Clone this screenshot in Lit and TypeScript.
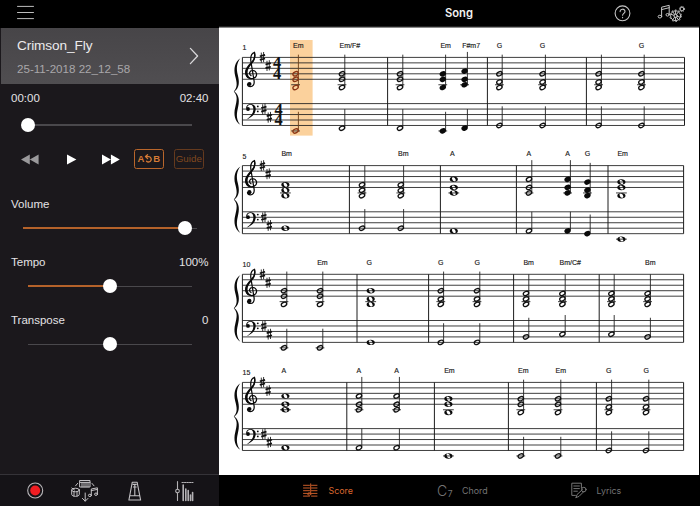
import { LitElement, html, svg, css } from "lit";
import { customElement, property } from "lit/decorators.js";

type Kind = "half" | "whole" | "quarter";
interface Chord {
  x: number;
  kind: Kind;
  treble: number[];
  bass: number;
  active?: boolean;
}
interface System {
  number: string;
  top: number;
  right: number;
  meter?: boolean;
  bars: number[];
  labels: [number, string][];
  chords: Chord[];
}

// Staff steps counted downwards from the top line.
const EM = [6, 8, 11];
const G = [6, 9, 11];
const BM = [7, 9, 11];
const A = [5, 8, 10];
const c = (x: number, kind: Kind, treble: number[], bass: number, active = false): Chord => ({ x, kind, treble, bass, active });

const SYSTEMS: System[] = [
  {
    number: "1", top: 30.4, right: 684.5, meter: true, bars: [387.6, 487.4, 586.4],
    labels: [[293, "Em"], [339.6, "Em/F#"], [440.4, "Em"], [462.2, "F#m7"], [496.8, "G"], [539.8, "G"], [638.8, "G"]],
    chords: [c(295.6, "half", EM, 10, true), c(342, "half", EM, 9), c(400, "half", EM, 9), c(442.8, "quarter", EM, 10), c(464.6, "quarter", A, 9),
      c(499.4, "half", G, 8), c(542.6, "half", G, 8), c(598.6, "half", G, 8), c(641.4, "half", G, 8)],
  },
  {
    number: "5", top: 30.6, right: 683.6, bars: [349.4, 440.4, 516.4, 608],
    labels: [[281.4, "Bm"], [398, "Bm"], [450, "A"], [526.4, "A"], [565.2, "A"], [584.8, "G"], [617.4, "Em"]],
    chords: [c(285.4, "whole", BM, 6), c(362, "half", BM, 6), c(400.8, "half", BM, 6), c(453.8, "whole", A, 7), c(529, "half", A, 7),
      c(567.6, "quarter", A, 7), c(587.4, "quarter", G, 8), c(621.4, "whole", EM, 10)],
  },
  {
    number: "10", top: 31.3, right: 683.6, bars: [357, 428.6, 513.6, 599.2],
    labels: [[317.2, "Em"], [366.6, "G"], [438, "G"], [474.4, "G"], [523.4, "Bm"], [559.6, "Bm/C#"], [645, "Bm"]],
    chords: [c(284, "half", EM, 10), c(320, "half", EM, 10), c(370.7, "whole", G, 8), c(440.8, "half", G, 8), c(477, "half", G, 8),
      c(526, "half", BM, 6), c(562.4, "half", BM, 5), c(611.4, "half", BM, 5), c(647.6, "half", BM, 6)],
  },
  {
    number: "15", top: 31.4, right: 683.6, bars: [346.8, 434.4, 508.4, 596.4],
    labels: [[281.4, "A"], [356.6, "A"], [394.2, "A"], [444.2, "Em"], [518, "Em"], [555.6, "Em"], [606, "G"], [643.6, "G"]],
    chords: [c(285.4, "whole", A, 7), c(359, "half", A, 7), c(396.6, "half", A, 7), c(448.4, "whole", EM, 10), c(520.8, "half", EM, 10),
      c(558, "half", EM, 10), c(608.8, "half", G, 8), c(646, "half", G, 8)],
  },
];

const GAP = 5.47;
const STEP = GAP / 2;
const BASS = 46.2;
const LEFT = 242.4;

@customElement("value-slider")
class ValueSlider extends LitElement {
  @property({ type: Number }) value = 0;
  @property({ type: Boolean }) filled = false;
  static styles = css`
    :host { display: grid; align-items: center; height: 14px; }
    .track { grid-area: 1 / 1; height: 1.4px; background: #4a484c; }
    .fill { grid-area: 1 / 1; height: 2px; background: #b5622a; }
    .knob { grid-area: 1 / 1; width: 14px; height: 14px; border-radius: 50%; background: #fff; }
  `;
  render() {
    return html`<div class="track"></div>
      ${this.filled ? html`<div class="fill" style="width:${this.value}%"></div>` : ""}
      <div class="knob" style="margin-left:calc(${this.value}% - 7px)"></div>`;
  }
}

@customElement("score-system")
class ScoreSystem extends LitElement {
  @property({ attribute: false }) system!: System;
  static styles = css`
    :host { display: block; height: 108px; }
    svg { display: block; width: 480px; height: 108px; overflow: visible; }
    .line { stroke: #1c1c1c; stroke-width: 0.85; fill: none; }
    .bar { stroke: #1c1c1c; stroke-width: 1; }
    .stem { stroke: #222; stroke-width: 0.9; }
    .ink { fill: #0a0a0a; }
    .open { fill: none; stroke: #111; stroke-width: 1.3; }
    .active .open { stroke: #8a3413; }
    .active .stem { stroke: #6d3d16; }
    .glow { fill: #fbd19c; }
    .clef { fill: none; stroke: #0a0a0a; stroke-linecap: round; stroke-width: 1.25; }
    .sharp { stroke: #111; fill: none; }
    .label { font: 7px "Liberation Sans", Arial, sans-serif; fill: #1a1a1a; stroke: #1a1a1a; stroke-width: 0.15; }
    .meter { font: bold 16.4px "Liberation Serif", serif; fill: #111; text-anchor: middle; }
  `;

  head(x: number, y: number, kind: Kind) {
    if (kind === "whole")
      return svg`<path class="ink" fill-rule="evenodd" transform="translate(${x} ${y})"
        d="M-4.1 0C-4.1 -1.8 -2.2 -2.7 0 -2.7S4.1 -1.8 4.1 0S2.2 2.7 0 2.7S-4.1 1.8 -4.1 0ZM-1.8 -.7C-1.6 .2 -.9 2.1 .5 2.1C1.7 2.1 2.2 1.4 1.8 .3C1.4 -1 .6 -2.1 -.5 -2.1C-1.6 -2.1 -2 -1.5 -1.8 -.7Z"/>`;
    if (kind === "quarter")
      return svg`<ellipse class="ink" rx="3.3" ry="2.6" transform="translate(${x} ${y}) rotate(-25)"/>`;
    return svg`<g transform="translate(${x} ${y}) rotate(-28)"><ellipse class="open" rx="2.85" ry="1.95"/></g>`;
  }

  sharp(x: number, y: number) {
    return svg`<g class="sharp" transform="translate(${x} ${y})">
      <path stroke-width=".85" d="M-1.1 -4.8V5.4M1.2 -5.4V4.8"/>
      <path stroke-width="1.7" d="M-2.6 -1.1L2.7 -2.5M-2.6 2.5L2.7 1.1"/></g>`;
  }

  meter(x: number, y: number) {
    return svg`<text class="meter" y=${y + 2 * GAP}><tspan x=${x}>4</tspan><tspan x=${x} dy=${2 * GAP}>4</tspan></text>`;
  }

  chord(ch: Chord, top: number) {
    const ty = (s: number) => top + s * STEP;
    const by = (s: number) => top + BASS + s * STEP;
    const w = ch.kind === "whole" ? 5.4 : 4.4;
    const sx = ch.x + 2.8;
    return svg`<g class=${ch.active ? "active" : ""}>
      ${ch.treble.some((s) => s >= 10) ? svg`<path class="line" d="M${ch.x - w} ${ty(10)}h${2 * w}"/>` : ""}
      ${ch.bass >= 10 ? svg`<path class="line" d="M${ch.x - w} ${by(10)}h${2 * w}"/>` : ""}
      ${ch.kind === "whole" ? "" : svg`<path class="stem" d="M${sx} ${ty(ch.treble[0] - 7)}V${ty(ch.treble[2]) - 1}M${sx} ${by(ch.bass - 7)}V${by(ch.bass) - 1}"/>`}
      ${ch.treble.map((s) => this.head(ch.x, ty(s), ch.kind))}
      ${this.head(ch.x, by(ch.bass), ch.kind)}
    </g>`;
  }

  render() {
    const s = this.system;
    const t = s.top;
    const b = t + BASS;
    const rows = [0, 1, 2, 3, 4];
    return html`<svg viewBox="219 0 480 108">
      ${s.meter ? svg`<rect class="glow" x="290" y="13" width="22.6" height="95.6"/>` : ""}
      ${rows.map((i) => svg`<path class="line" d="M${LEFT} ${t + i * GAP}H${s.right}M${LEFT} ${b + i * GAP}H${s.right}"/>`)}
      ${[LEFT, ...s.bars, s.right].map((x) => svg`<path class="bar" d="M${x} ${t}V${b + 4 * GAP}"/>`)}
      <g transform="translate(${LEFT} ${t})">
        <path class="ink" d="M-2 .8C-5.8 5.5 -6.2 11 -4.6 17.5C-3 24 -2.6 30 -8 34C-2.6 38 -3 44.5 -4.6 51C-6.2 57.5 -5.8 63 -2 67.4C-7.6 63.8 -9 57 -7.2 50C-5.6 43 -4.4 38.5 -8.6 34C-4.4 29.5 -5.6 25 -7.2 18.5C-9 11 -7.6 4.4 -2 .8Z"/>
        <path class="clef" d="M8.6 18.2C6.2 16.8 6.9 13 10.2 13C14 13.2 15.2 17.2 13.2 19.6C10.8 22.2 5.2 21.8 3.8 17.6C2.6 12.8 5.6 9.6 8.8 6.2C11.8 3 13.3 -1 12.1 -5C9.6 -4.2 8 -1 8.4 3.4L11.7 23.6C12.2 27.2 10.4 29.2 8 29.2C6.4 29.2 5.2 28.2 5.1 26.8"/>
        <path class="ink" d="M12.2 -5.2C13.8 -2 12.7 2.8 9.5 6.3C6.6 9.6 4.9 12.4 5.2 16C5.5 18.7 7.4 20.5 9.6 20.9C6 22 2.6 19 2.7 15C2.8 10.6 6 7.6 8.6 4.9C10.6 2.7 12 -.2 11.6 -2.6Z"/>
        <circle class="ink" cx="7" cy="26.6" r="2.1"/>
      </g>
      <g transform="translate(${LEFT} ${b})">
        <circle class="ink" cx="5.6" cy="5.4" r="1.9"/>
        <path class="ink" d="M3.8 5C3.4 2 6 .2 8.6 .4C12 .6 13.8 3 13.2 6.6C12.6 10.8 9 14 4.2 15.8C8 13.2 10.8 10 11 6.2C11.1 3.2 9.9 1.2 8 1.2C6 1.2 4.8 2.6 4.7 4.4Z"/>
        <circle class="ink" cx="15.4" cy="2.8" r=".9"/><circle class="ink" cx="15.4" cy="7.8" r=".9"/>
      </g>
      ${this.sharp(262.4, t)}${this.sharp(268.1, t + 3 * STEP)}
      ${this.sharp(263.8, b + 2 * STEP)}${this.sharp(269.3, b + 5 * STEP)}
      ${s.meter ? svg`${this.meter(277.2, t)}${this.meter(278.6, b)}` : ""}
      <text class="label" x="242.6" y=${t - 7}>${s.number}</text>
      ${s.labels.map(([x, l]) => svg`<text class="label" x=${x} y=${t - 9.8}>${l}</text>`)}
      ${s.chords.map((ch) => this.chord(ch, t))}
    </svg>`;
  }
}

@customElement("app-root")
class AppRoot extends LitElement {
  static styles = css`
    :host { display: flex; width: 700px; height: 506px; overflow: hidden; background: #000; color: #e4e2e5;
      font-family: "Liberation Sans", Arial, sans-serif; }
    svg { display: block; flex: none; fill: none; stroke-linecap: round; stroke-linejoin: round; }
    .side { display: flex; flex-direction: column; box-sizing: border-box; width: 219px; padding-left: 1px; background: #1b181c; flex: none; }
    .menu { height: 28px; box-sizing: border-box; padding: 5px 0 0 16px; margin-left: -1px; background: #000; }
    .card { display: flex; align-items: center; justify-content: space-between; height: 56px; box-sizing: border-box;
      padding: 0 20px 0 16px; background: linear-gradient(#474548, #504e51); }
    .name { font-size: 13.6px; line-height: 16px; padding-top: 1px; letter-spacing: -0.08px; color: #ecebed; }
    .date { font-size: 11.6px; line-height: 14px; margin-top: 8px; color: #a9a7aa; }
    .row { display: flex; justify-content: space-between; align-items: center; padding: 0 10.5px 0 10px; height: 14px; font-size: 11.5px; }
    .times { margin-top: 7px; }
    value-slider { margin: 0 27.5px 0 27px; }
    .seek { margin-top: 13px; }
    .transport { display: flex; align-items: center; height: 20px; margin: 17px 0 0 19px; }
    .play { margin-left: 28px; }
    .next { margin-left: 25px; }
    .chip { box-sizing: border-box; display: flex; align-items: center; justify-content: center; height: 19.4px; border-radius: 2.5px; font-size: 9.5px; }
    .ab { width: 29.6px; margin-left: 13px; border: 1.3px solid #b9662b; color: #d67a35; font-weight: bold; font-size: 9.5px; }
    .guide { width: 30px; margin-left: 10.2px; border: 1.2px solid #653a1e; color: #80481f; font-size: 9.8px; }
    .volume { margin-top: 28.4px; }
    .vol-slider { margin: 10px 22px 0 21.6px; }
    .tempo { margin-top: 20px; }
    .gap { margin-top: 10px; }
    .transpose { margin-top: 20px; }
    .tools { display: flex; align-items: center; margin: auto 0 0 -1px; padding-left: 27px; height: 31px; border-top: 1px solid #353338; background: #151317; }
    .song { margin-left: 27px; } .metro { margin-left: 29px; } .mixer { margin-left: 33px; }
    .main { display: flex; flex-direction: column; width: 480px; }
    .top { display: grid; grid-template-columns: 1fr auto auto; align-items: center; height: 26px; border-bottom: 1px solid #242424; padding-right: 13px; }
    .title { font: 600 11.2px Inter, sans-serif; color: #f2f2f2; padding-left: 226px; }
    .extras { margin-left: 26px; }
    .score { height: 447px; background: #fff; border-top: 1px solid #888; }
    .sheet { display: flex; flex-direction: column; margin-top: -1px; }
    .tabs { display: flex; align-items: center; height: 31px; padding-left: 84px; font: 8.9px Inter, sans-serif; color: #747474; }
    .tab { display: flex; align-items: center; height: 34px; }
    .score-tab { color: #d8672f; width: 134px; gap: 10.5px; }
    .chord-tab { width: 134px; gap: 9.5px; }
    .lyrics-tab { gap: 9.5px; }
    .c { font-size: 14px; font-weight: 300; } .seven { font-size: 8.5px; margin: 6px 0 0 -9px; }
  `;

  render() {
    return html`
      <div class="side">
        <div class="menu"><svg width="20" height="16" stroke="#bdbdbd" stroke-width="1"><path d="M1.5 1.4h16M1.5 7.5h16M1.5 13.6h16"/></svg></div>
        <div class="card">
          <div><div class="name">Crimson_Fly</div><div class="date">25-11-2018 22_12_58</div></div>
          <svg width="10" height="18" stroke="#d9d8da" stroke-width="1.3"><path d="M1.4 1.4L8.6 9L1.4 16.6"/></svg>
        </div>
        <div class="row times"><span>00:00</span><span>02:40</span></div>
        <value-slider class="seek" .value=${0}></value-slider>
        <div class="transport">
          <svg width="19" height="11"><path fill="#9a999b" d="M9.8 .6V10.4L1 5.5ZM18.6 .6V10.4L9.8 5.5Z"/></svg>
          <svg class="play" width="10" height="11"><path fill="#fff" d="M0 .4L9.4 5.5L0 10.6Z"/></svg>
          <svg class="next" width="19" height="11"><path fill="#fff" d="M0 .6L8.9 5.5L0 10.4ZM8.9 .6L17.8 5.5L8.9 10.4Z"/></svg>
          <div class="chip ab"><span>A</span><svg width="9" height="10" stroke="#d67a35" stroke-width="1.3"><path d="M1.8 2.6H4.8A2.7 2.7 0 1 1 2.6 7.2M3.6 .8L1.5 2.6L3.6 4.6"/></svg><span>B</span></div>
          <div class="chip guide">Guide</div>
        </div>
        <div class="row volume"><span>Volume</span></div>
        <value-slider class="vol-slider" .value=${93} filled></value-slider>
        <div class="row tempo"><span>Tempo</span><span>100%</span></div>
        <value-slider class="gap" .value=${50} filled></value-slider>
        <div class="row transpose"><span>Transpose</span><span>0</span></div>
        <value-slider class="gap" .value=${50}></value-slider>
        <div class="tools">
          <svg width="17" height="17"><circle cx="8.2" cy="8.5" r="7.5" stroke="#b8b6b9" stroke-width="1.1"/><circle cx="8.2" cy="8.5" r="5" fill="#f01d22"/></svg>
          <svg class="song" width="28" height="24" stroke="#c4c2c5" stroke-width="1">
            <path d="M9 1.5h10v6.5h-10zM9 3.4h10M11 3.4v4.6M13 3.4v4.6M15 3.4v4.6M17 3.4v4.6M6.6 4.4L4.6 6.8M21 4.4L23 6.8"/>
            <ellipse cx="4.5" cy="11" rx="3.8" ry="1.8"/><path d="M.7 11v4.4C1 18 8 18 8.3 15.4V11M3 13v4M6 13v4M.8 9L3.5 11"/>
            <path d="M20.3 16.2V10L26.4 8.8V15M20.3 11.6L26.4 10.4"/><ellipse cx="18.9" cy="16.4" rx="1.5" ry="1.2"/><ellipse cx="25" cy="15.2" rx="1.5" ry="1.2"/>
            <path d="M14.2 14V22M11.4 19.4L14.2 22.2L17 19.4"/>
          </svg>
          <svg class="metro" width="14" height="22" stroke="#c4c2c5" stroke-width="1.1">
            <path d="M4.3 2.2h4.8L12.6 20H.9zM2.2 15.8H11.4M6.8 4.5V15.4M5.4 7h2.8M5.2 4.4h3"/>
          </svg>
          <svg class="mixer" width="19" height="22" stroke="#b4b2b5" stroke-width="1.1" stroke-linecap="butt">
            <path d="M2.5 1.5V9M2.5 13V20.5"/><circle cx="2.5" cy="11" r="1.8"/>
            <path stroke-width="1.6" d="M8.2 5V20.5M10.8 9V20.5M13.2 10.5V20.5M15.5 15V20.5M17.6 12.5V20.5"/><path stroke-dasharray="1.4 1.1" d="M7 2.5h11"/>
          </svg>
        </div>
      </div>
      <div class="main">
        <div class="top">
          <div class="title">Song</div>
          <svg width="17" height="17" stroke="#c6c6c6" stroke-width="1.1"><circle cx="8.5" cy="8.3" r="7.4"/><path d="M6.1 6.6C6 3.4 11 3.4 11 6.4C11 8.2 8.6 8.4 8.6 10.2M8.6 12.4v.3"/></svg>
          <svg class="extras" width="29" height="20" stroke="#c6c6c6" stroke-width="1">
            <path d="M4.6 13.4V4.2L12.2 2.3V11.4M4.6 6.6L12.2 4.7"/><ellipse cx="2.9" cy="13.6" rx="1.8" ry="1.4"/><ellipse cx="10.6" cy="11.8" rx="1.6" ry="1.3"/>
            <circle cx="18.6" cy="12.8" r="5"/><circle cx="18.6" cy="12.8" r="5.8" stroke-dasharray="1.6 2.1" stroke-linecap="butt"/><circle cx="18.6" cy="12.8" r="1.6"/>
            <path d="M18.6 8v3M18.6 14.6v3M14 11.3l3 1M20.3 13.3l3 1M15.8 16.8l1.8-2.6M19.6 11.4l1.8-2.6M15.8 8.8l1.8 2.6M19.6 14.2l1.8 2.6"/>
            <circle cx="25" cy="6" r="1.9"/><circle cx="25" cy="6" r="2.6" stroke-dasharray="1 1.1" stroke-linecap="butt"/>
          </svg>
        </div>
        <div class="score"><div class="sheet">${SYSTEMS.map((s) => html`<score-system .system=${s}></score-system>`)}</div></div>
        <div class="tabs">
          <div class="tab score-tab">
            <svg width="15" height="15" stroke="#c95c29" stroke-width="1" stroke-linecap="butt"><path d="M.5 2.3h6M.5 5h6M.5 7.7h6M.5 10.4h6M.5 13.1h6M8.5 2.3h5.5M8.5 5h5.5M8.5 7.7h5.5M8.5 10.4h5.5M8.5 13.1h5.5M7.7 .8V10.6"/><ellipse cx="6.3" cy="11" rx="1.6" ry="1.2"/></svg>
            <span>Score</span></div>
          <div class="tab chord-tab"><span class="c">C</span><span class="seven">7</span><span>Chord</span></div>
          <div class="tab lyrics-tab">
            <svg width="16" height="17" stroke="#777" stroke-width="1"><path d="M10.4 6V1.2H.8V13.4H4.4M2.8 4h5.6M2.8 6.6h5.6M2.8 9.2h3.6M5 15.6L6 12.6L11.4 7.6M5 15.6L8 14.4L13 9.4"/><circle cx="12.8" cy="7.6" r="2.3"/></svg>
            <span>Lyrics</span></div>
        </div>
      </div>`;
  }
}
